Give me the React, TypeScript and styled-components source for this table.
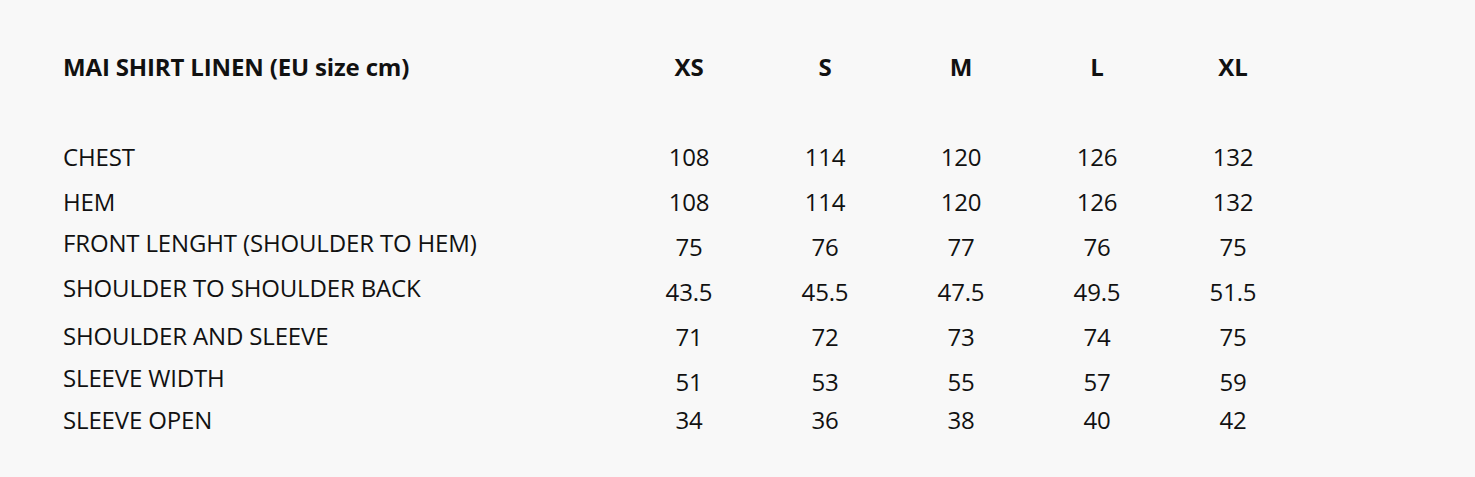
import React from 'react';
import styled, { createGlobalStyle } from 'styled-components';

const sizes = ['XS', 'S', 'M', 'L', 'XL'];

// label rows do not sit exactly on the number rows in the original chart
const rows = [
  { label: 'CHEST', labelHeight: 45, valueHeight: 45, values: ['108', '114', '120', '126', '132'] },
  { label: 'HEM', labelHeight: 41, valueHeight: 45, values: ['108', '114', '120', '126', '132'] },
  { label: 'FRONT LENGHT (SHOULDER TO HEM)', labelHeight: 45, valueHeight: 45, values: ['75', '76', '77', '76', '75'] },
  { label: 'SHOULDER TO SHOULDER BACK', labelHeight: 48, valueHeight: 45, values: ['43.5', '45.5', '47.5', '49.5', '51.5'] },
  { label: 'SHOULDER AND SLEEVE', labelHeight: 42, valueHeight: 45, values: ['71', '72', '73', '74', '75'] },
  { label: 'SLEEVE WIDTH', labelHeight: 42, valueHeight: 38, values: ['51', '53', '55', '57', '59'] },
  { label: 'SLEEVE OPEN', labelHeight: 45, valueHeight: 45, values: ['34', '36', '38', '40', '42'] },
];

const App = () => {
  return (
    <>
      <GlobalStyle />
      <Page>
        <LabelColumn>
          <Heading>MAI SHIRT LINEN (EU size cm)</Heading>
          {rows.map((row) => (
            <Label key={row.label} $height={row.labelHeight}>
              {row.label}
            </Label>
          ))}
        </LabelColumn>
        {sizes.map((size, i) => (
          <SizeColumn key={size}>
            <Heading>{size}</Heading>
            {rows.map((row) => (
              <Value key={row.label} $height={row.valueHeight}>
                {row.values[i]}
              </Value>
            ))}
          </SizeColumn>
        ))}
      </Page>
    </>
  );
};

const GlobalStyle = createGlobalStyle`
  body {
    margin: 0;
    background: #f8f8f8;
    font-family: "Open Sans", "Liberation Sans", sans-serif;
    color: #111;
  }
`;

const Page = styled.div`
  display: flex;
  align-items: flex-start;
  height: 477px;
  box-sizing: border-box;
  padding: 44px 0 0 63px;
  background: #f8f8f8;
`;

const LabelColumn = styled.div`
  display: flex;
  flex-direction: column;
  width: 558px;
`;

const SizeColumn = styled.div`
  display: flex;
  flex-direction: column;
  align-items: center;
  width: 136px;
`;

const Heading = styled.div`
  height: 46px;
  line-height: 46px;
  margin-bottom: 44px;
  font-size: 24px;
  font-weight: 700;
  letter-spacing: -0.15px;
  white-space: nowrap;
`;

const Label = styled.div<{ $height: number }>`
  height: ${(p) => p.$height}px;
  line-height: 45px;
  font-size: 24px;
  letter-spacing: -0.15px;
  white-space: nowrap;
`;

const Value = styled.div<{ $height: number }>`
  height: ${(p) => p.$height}px;
  line-height: 45px;
  font-size: 24px;
  letter-spacing: -0.15px;
`;

export default App;
